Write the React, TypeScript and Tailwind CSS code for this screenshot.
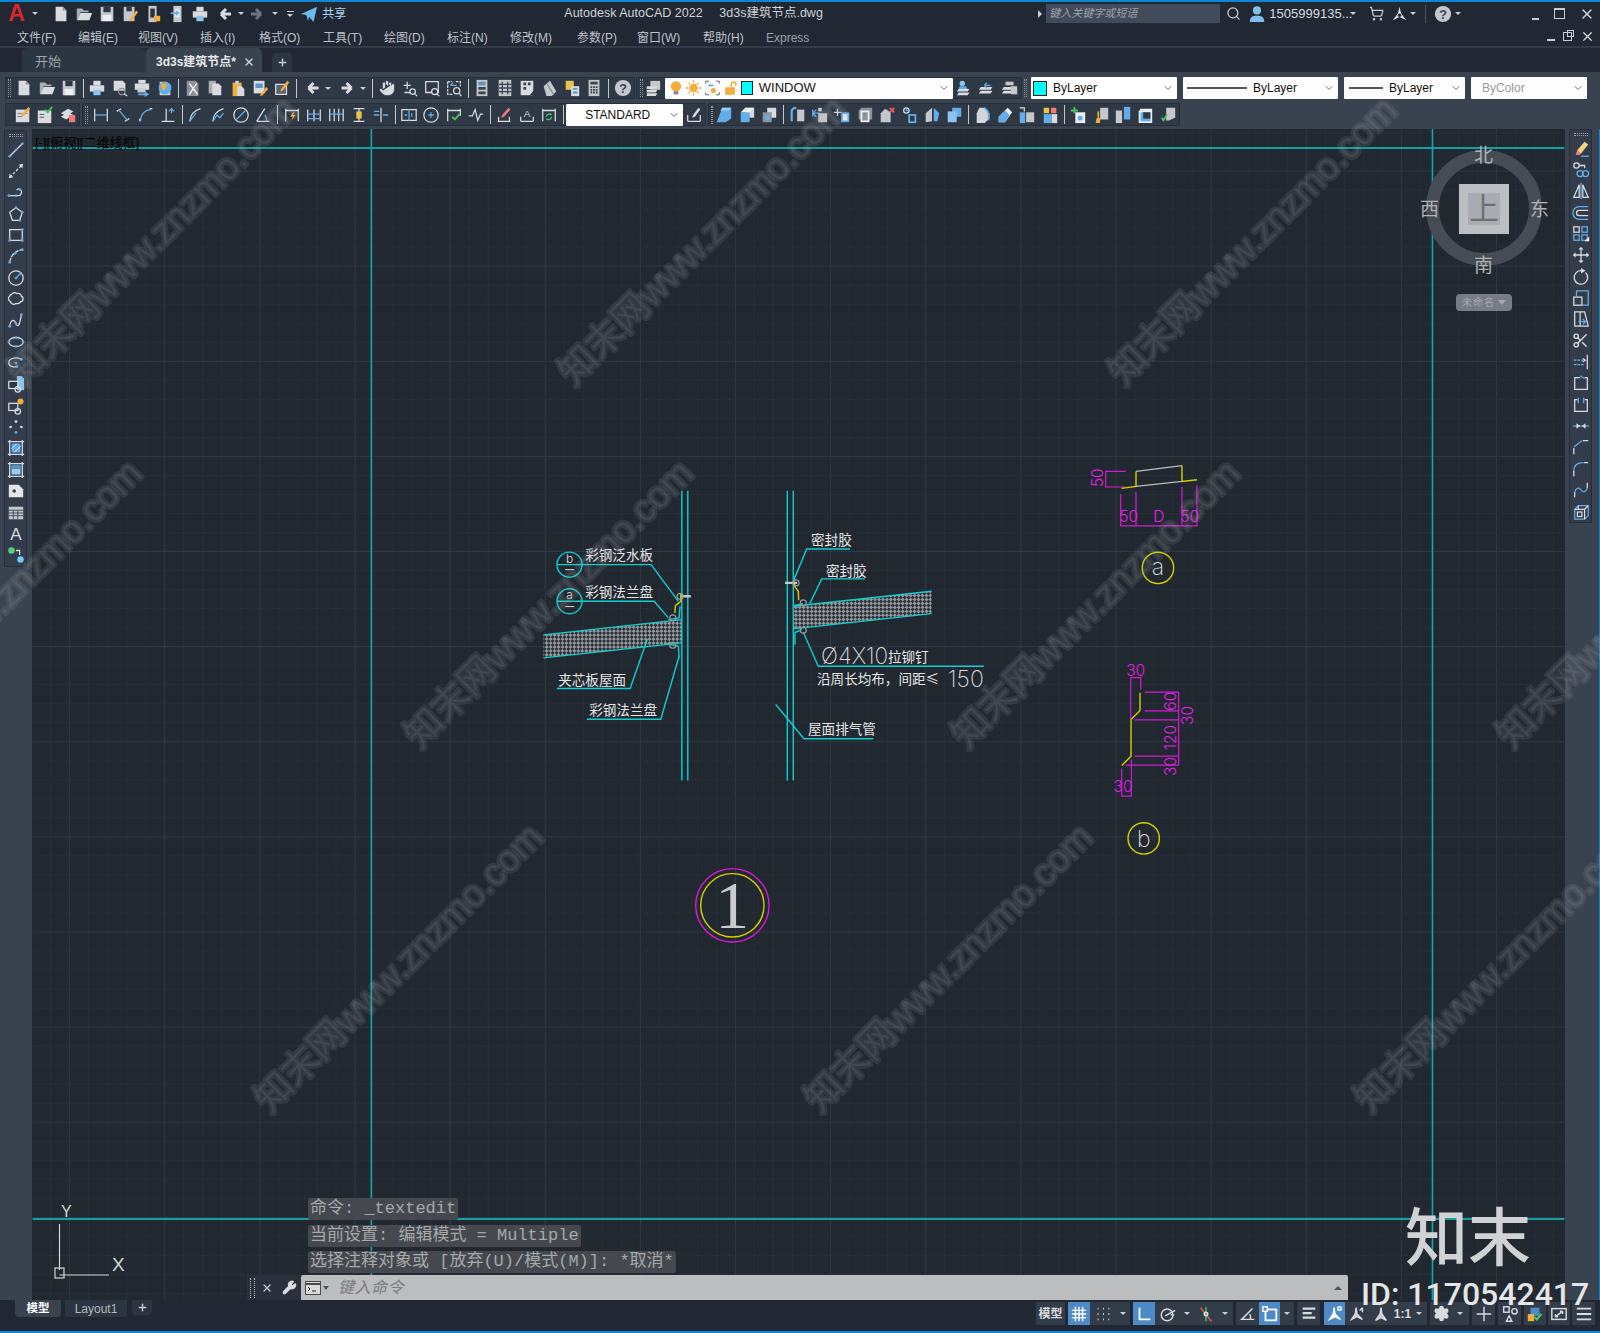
import React from "react";
import { Hand, Scissors, Settings, ChevronDown, Search, ShoppingCart, X, Plus, Wrench } from "lucide-react";

const W = "#d9dbdf";
const B = "#63ade8";
const O = "#f3ad3c";
const D = "#2f3845";

const dot = (x: number, y: number, c = B) => <circle cx={x} cy={y} r={1.5} fill={c} stroke="none" />;
const f = (d: string, c = W) => <path d={d} fill={c} stroke="none" />;

// toolbar glyphs, all on a 20x20 box
const ICONS: Record<string, React.ReactNode> = {
  doc: <>{f("M4 2h8l4 4v12H4z")}{f("M12 2v4h4z", "#8d929a")}</>,
  open: <>{f("M2 4h6l2 2h5v2H6l-2 9H2z", "#a9adb4")}{f("M6 9h13l-3 8H3z")}</>,
  save: <>{f("M3 2h14v16H3z", "#c4c7cc")}{f("M6 2h8v6H6z", D)}{f("M5 11h10v7H5z", "#eceef0")}</>,
  saveas: <>{f("M3 2h12v16H3z", "#c4c7cc")}{f("M6 2h6v5H6z", D)}{f("M17 6l2 2-7 9-3 1 1-3z", O)}</>,
  phone: <>{f("M5 1h9v18H5z", "#c4c7cc")}{f("M7 4h5v10H7z", "#2a313c")}{f("M11 12h7v6h-7z", O)}</>,
  phone2: <>{f("M6 1h9v18H6z", "#c4c7cc")}{f("M8 4h5v10H8z", "#dfe9f2")}{f("M3 8h6V6l4 3-4 3v-2H3z", B)}</>,
  print: <>{f("M6 2h8v5H6z")}{f("M2 7h16v7H2z")}{f("M6 12h8v6H6z", "#8cc4ee")}</>,
  preview: <>{f("M3 2h10l3 3v8H3z")}<circle cx={12} cy={14} r={3.5} stroke="#8b9098" /><path d="M14.5 16.5L18 19" /></>,
  plot: <>{f("M6 1h8v4H6z")}{f("M2 5h16v7H2z")}{f("M5 10h9v5H5z", "#c9ccd1")}{f("M6 16h7v-2l5 3-5 3v-2H6z", B)}</>,
  globe: <>{f("M4 3h8l4 3v12H4z", "#c9ccd1")}<circle cx={10} cy={10} r={7} fill={B} stroke="none" />{f("M5 6l5-2 2 4-3 5-3-3z", O)}</>,
  cut: <>{f("M3 2h10l3 3v14H3z", "#8d929a")}<path d="M6 5l9 12M14 5L6 17" stroke="#fff" /></>,
  copy: <>{f("M3 2h8v14H3z", "#a9adb4")}{f("M7 5h7l3 3v10H7z")}</>,
  paste: <>{f("M4 4h10v15H4z", O)}{f("M7 2h4v4H7z", "#c9ccd1")}{f("M9 8h5l3 3v8H9z")}</>,
  match: <>{f("M3 2h12v14H3z")}{f("M5 5h8v5H5z", "#5b95c9")}{f("M17 9l2 2-6 7-3 1 1-3z", O)}</>,
  brush: <>{f("M3 6h12v11H3z", "#59616d")}<path d="M3 6h12v11H3z" />{f("M16 2l2 2-7 9-3 1 1-3z", O)}</>,
  zoomrt: <><path d="M8 3v8M4 7h8M5 15h6" /><circle cx={14} cy={14} r={3} /><path d="M16 16l3 3" /></>,
  zoomwin: <><path d="M3 3h14v12H3z" /><circle cx={13} cy={14} r={3.4} fill={D} /><path d="M15.5 16.5L18 19" /></>,
  zoomprev: <><path d="M3 3h5M12 3h5v5M3 3v14h5" strokeDasharray="3 1" /><path d="M6 7h7M6 7l3-3" stroke={B} /><circle cx={13} cy={13} r={3.5} /><path d="M16 16l2 3" /></>,
  props: <>{f("M4 1h12v18H4z", "#c4c7cc")}{f("M6 3h8v4H6z", "#5b95c9")}{f("M6 9h8v3H6zM6 14h8v3H6z", "#3a4350")}</>,
  sheet: <>{f("M3 1h14v18H3z", "#c4c7cc")}<path d="M7 3v14M13 3v14M3 6h14M3 10h14M3 14h14" stroke="#3a4350" /></>,
  tools: <>{f("M3 2h14v16H3z")}{f("M6 4h3v3H6zM11 4h3v3h-3zM6 9h3v3H6z", "#3a4350")}{f("M13 18l5-6v6z", D)}</>,
  dwg: <>{f("M3 8L10 2l7 12-5 5H6z", "#c4c7cc")}<path d="M7 6l7 11" stroke="#8d929a" /></>,
  mark: <>{f("M3 2h9v10H3z", "#e9c44d")}{f("M9 8h9v11H9z")}{f("M11 10h5v2h-5zM11 14h5v2h-5z", "#5b95c9")}</>,
  calc: <>{f("M4 1h12v18H4z", "#c4c7cc")}{f("M6 3h8v3H6z", "#3a4350")}{f("M6 8h2v2H6zM9 8h2v2H9zM12 8h2v2h-2zM6 11h2v2H6zM9 11h2v2H9zM12 11h2v2h-2zM6 14h2v2H6zM9 14h2v2H9zM12 14h2v2h-2z", "#3a4350")}</>,
  help: <><circle cx={10} cy={10} r={9} fill="#c4c7cc" stroke="none" /><text x={10} y={15} textAnchor="middle" fontSize={14} fontWeight={700} fill="#39424f" stroke="none" fontFamily="Liberation Sans">?</text></>,
  layer: <>{f("M6 2h11v10H6z", "#c4c7cc")}{f("M2 8h12l-2 3H2zM2 12h12l-2 3H2zM2 16h12l-2 3H2z")}</>,
  lay1: <>{f("M7 2a3 3 0 1 1 0 6 3 3 0 0 1 0-6z", "#8cc4ee")}{f("M3 11h12l-2 3H1zM3 15h12l-2 3H1z")}{f("M4 8h7l2 3H3z", B)}</>,
  lay2: <>{f("M3 9h13l-2 3H1zM3 13h13l-2 3H1z")}<path d="M14 7H7M7 7l3-3M7 7l3 3" stroke={B} /></>,
  lay3: <>{f("M3 9h11l-2 3H1zM3 13h11l-2 3H1z")}{f("M11 8h7v9h-7z", "#c4c7cc")}{f("M5 3h9v4H5z", "#c4c7cc")}</>,
  edit1: <>{f("M2 4h15v14H2z")}{f("M4 8h5v1H4zM4 11h5v1H4zM11 8h4v1h-4z", "#59616d")}{f("M16 1l2 2-7 8-3 1 1-3z", O)}</>,
  edit2: <>{f("M2 5h15v14H2z")}{f("M4 9h5v1H4zM4 12h5v1H4z", "#59616d")}<path d="M10 4l3 3 5-6" stroke="#4dc464" strokeWidth={2} /></>,
  edit3: <>{f("M2 8l8-5 6 3-8 5zM2 12l8-5 6 3-8 5z")}{f("M11 10h7v8h-7z", "#ef7c78")}</>,
  dimh: <><path d="M3 3v14M17 3v14" /><path d="M3 10h14" stroke={B} /></>,
  dima: <><path d="M3 6l5-3M12 17l5-3" /><path d="M5 4l10 12" stroke={B} /></>,
  dimarc: <><path d="M3 17v-3M17 3h-3" /><path d="M4 17C4 9 9 4 16 4" stroke={B} /></>,
  dimo: <><path d="M3 17h14M8 3v14" /><path d="M14 3v5M11 6l3-3 3 3" stroke={B} /></>,
  dimr: <><path d="M3 17C4 9 8 5 15 3" /><path d="M3 17l7-9" stroke={B} /></>,
  dimj: <><path d="M3 17C4 9 8 5 15 3" /><path d="M3 17l5-7 3 3 4-5" stroke={B} /></>,
  dimd: <><circle cx={10} cy={10} r={8} /><path d="M5 15L15 5" stroke={B} /></>,
  dimang: <><path d="M3 17h14M3 17L12 3" /><path d="M12 10c2 2 2 4 2 7" stroke={B} /></>,
  qdim: <><path d="M3 3v14M17 3v14M3 5h14" /><path d="M11 7l-3 5h3l-2 5 5-7h-3l2-3z" fill={O} stroke="none" /></>,
  base: <><path d="M3 4v13M17 4v13M10 4v13" /><path d="M3 9h14M3 14h14" stroke={B} /></>,
  cont: <><path d="M3 3v14M8 3v14M13 3v14M18 3v14" /><path d="M3 9h15" stroke={B} /></>,
  space: <><path d="M4 3h12M4 17h12M10 3v14" /><path d="M7 6h6v8H7z" fill="#e9c44d" stroke="none" /></>,
  brk: <><path d="M10 2v16" /><path d="M2 10h6M12 10h6M2 6h6" stroke={B} /></>,
  tol: <><rect x={2} y={4} width={16} height={12} /><path d="M10 4v12M5 10h3M13 8v4" stroke={B} /></>,
  center: <><circle cx={10} cy={10} r={8} /><path d="M10 7v6M7 10h6" stroke={B} /></>,
  insp: <><path d="M3 3v14M17 3v8M3 5h14" /><path d="M8 12l3 3 5-6" stroke="#4dc464" strokeWidth={2} /></>,
  jog: <><path d="M2 11h4l3-7 3 12 3-7h3" /></>,
  dedit: <><path d="M3 17h14M4 17v-5M16 17v-5" />{f("M15 2l2 2-7 8-3 1 1-3z", "#ef7c78")}</>,
  dtedit: <><path d="M3 17h14M3 12v5M17 12v5" /><text x={10} y={12} textAnchor="middle" fontSize={11} fill={W} stroke="none" fontFamily="Liberation Sans">A</text></>,
  dupd: <><path d="M3 3v14M17 3v14M3 5h14" /><path d="M7 12a3.5 3.5 0 0 1 6-2M13 12a3.5 3.5 0 0 1-6 2" stroke="#4dc464" /></>,
  dstyle: <><path d="M3 17h14M3 10v7M17 10v7" />{f("M15 2l2 2-6 8-3 1 1-3z", W)}</>,
  s1: <>{f("M8 2h10v12l-6 4H2l3-8z", B)}{f("M8 2h10L15 5H6z", "#9bd0f4")}</>,
  s2: <>{f("M8 2h10v11H8z", "#d3d6da")}{f("M3 7h10v11H3z", B)}{f("M3 7l5-5h10l-5 5z", "#eceef0")}</>,
  s3: <>{f("M8 2h10v11H8z")}{f("M3 7h10v11H3z", "#8d929a")}{f("M6 10h5v6H6z", B)}</>,
  s4: <><path d="M3 17V6c0-2 2-4 5-4" stroke={B} strokeWidth={2.5} />{f("M9 4h8v13H9z", "#c4c7cc")}</>,
  s5: <><path d="M2 4v8M2 8h8M6 4l-4 4 4 4" stroke={B} />{f("M8 8h10v10H8z", "#c4c7cc")}{f("M8 2h4v4H8z", "#c4c7cc")}</>,
  s6: <><path d="M5 3v8M1 7h8" />{f("M9 7h9v11H9z", B)}{f("M11 9h5v7h-5z", "#eceef0")}</>,
  s7: <>{f("M3 5l3-3h12v13H3z", "#8d929a")}{f("M5 5h10v13H5z", "#eceef0")}{f("M7 7h6v9H7z", "#8d929a")}</>,
  s8: <>{f("M3 8l5-5 6 4v11H3z", "#c4c7cc")}<path d="M13 2l5 5M18 2l-5 5" stroke="#ef5a5a" strokeWidth={2} /></>,
  s9: <><circle cx={6} cy={5} r={3} /><path d="M6 2v3h4" stroke={B} />{f("M8 9h9v10H8z", B)}{f("M10 11h5v6h-5z", D)}</>,
  s10: <>{f("M3 8L10 2v15l-7 1z", "#c4c7cc")}{f("M12 2l6 6-2 9h-4z", B)}</>,
  s11: <>{f("M8 2h10v10H8z", B)}{f("M3 6h10v12H3z", "#8cc4ee")}</>,
  s13: <>{f("M6 2h6l5 6v6l-5 5H3V8z", "#d3d6da")}<path d="M11 2c5 2 6 8 5 14" stroke={B} strokeWidth={2} /></>,
  s14: <>{f("M3 12l10-10 5 5-8 11H3z", "#eceef0")}{f("M3 12l7-7 5 5-5 8H3z", B)}</>,
  s15: <>{f("M9 7h9v11H9z", "#c4c7cc")}{f("M2 7h6v12H2z", B)}<path d="M2 2h5v4" stroke={W} /></>,
  s16: <>{f("M3 2h6v6H3z", "#e9c44d")}{f("M11 2h6v6h-6z", "#ef7c78")}{f("M3 9h9v10H3z", B)}{f("M12 9h6v10h-6z", W)}</>,
  s17: <><path d="M6 1v7M2 5h8" stroke="#4dc464" strokeWidth={2} />{f("M7 7h11v12H7z", "#eceef0")}{f("M10 11h5v5h-5z", B)}</>,
  s18: <>{f("M9 2h9v13H9z", "#c4c7cc")}{f("M5 14l2-2 2 2v5H4z", O)}<path d="M7 6v6" stroke={O} strokeWidth={2} /></>,
  s19: <>{f("M2 5h7v14H2z", "#c4c7cc")}{f("M11 1h7v14h-7z", B)}</>,
  s20: <>{f("M5 3h13v16H3V6z", "#eceef0")}{f("M5 7h11v10H5z", B)}{f("M8 7h8v7H8z", D)}</>,
  s21: <>{f("M8 2h10v11l-7 3H8z", "#c4c7cc")}<path d="M3 13l2 3 4-7" stroke="#4dc464" strokeWidth={2} /></>,
  // left column
  line: <><path d="M3 17L17 3" />{dot(3, 17)}{dot(17, 3)}{dot(10, 10)}</>,
  xline: <><path d="M3 17L17 3" strokeDasharray="3 2" /><path d="M2 18l5-1-4-4zM18 2l-5 1 4 4z" fill={W} stroke="none" /></>,
  pline: <><path d="M2 14h8M11 14c5 1 7-5 3-7-1-1-3 0-3 1" />{dot(2, 14)}{dot(10, 14)}{dot(14, 7)}</>,
  polygon: <><path d="M10 3l7 5-3 9H6L3 8z" />{dot(10, 3)}{dot(14, 17)}{dot(17, 8)}</>,
  rect: <><rect x={3} y={4} width={14} height={12} />{dot(17, 4)}{dot(3, 16)}{dot(17, 16)}</>,
  arc: <><path d="M3 17C4 9 10 4 17 3" strokeDasharray="5 1" />{dot(3, 17)}{dot(9, 7)}{dot(17, 3)}</>,
  circle: <><circle cx={10} cy={10} r={8} /><path d="M10 10l5-5" stroke={B} />{dot(10, 10)}{dot(15, 5)}</>,
  cloud: <><path d="M5 5c2-3 5-2 6-1 3-1 5 1 5 3 3 1 2 6-1 6-1 3-4 2-5 2-3 2-6 0-6-2-3-1-3-5-1-6 0-1 1-2 2-2z" /></>,
  spline: <><path d="M3 17c1-8 5-8 7-3s4 2 6-10" />{dot(3, 17)}{dot(10, 14)}{dot(16, 4)}</>,
  ellipse: <><ellipse cx={10} cy={10} rx={8} ry={5} />{dot(10, 5)}{dot(2, 10)}{dot(18, 10)}{dot(10, 15)}</>,
  earc: <><path d="M16 6c-4-3-14-2-14 4 0 4 6 5 9 4" />{dot(16, 6)}{dot(11, 14)}{dot(10, 10)}</>,
  blk: <>{f("M11 1h5l3 3v13H11z", "#8cc4ee")}<rect x={2} y={7} width={10} height={8} stroke={W} fill={D} /><circle cx={12} cy={16} r={3} /></>,
  mblk: <><rect x={2} y={7} width={10} height={8} /><circle cx={12} cy={16} r={3} /><circle cx={15} cy={5} r={3.4} fill={O} stroke="none" /></>,
  point: <>{dot(10, 4, W)}{dot(4, 10, W)}{dot(16, 10, W)}{dot(10, 16, B)}</>,
  hatch: <><path d="M1 3h18M1 17h18M3 1v18M17 1v18" />{f("M5 5h10v10H5z", B)}<path d="M5 11l6-6M8 15l7-7" stroke="#dce9f5" strokeWidth={1} /></>,
  grad: <><path d="M1 3h18M1 17h18M3 1v18M17 1v18" />{f("M5 5h10v10H5z", "#9bd0f4")}{f("M5 5h10v4H5z", "#4c91cc")}</>,
  region: <>{f("M2 3h11l5 5v9H2z", "#e3e5e7")}<circle cx={8} cy={10} r={2} fill="#39424f" stroke="none" /></>,
  table: <>{f("M2 3h16v14H2z", "#c4c7cc")}<path d="M2 7h16M2 10h16M2 13h16M7 7v10M12 7v10" stroke="#39424f" strokeWidth={1} /></>,
  atext: <text x={10} y={17} textAnchor="middle" fontSize={19} fill={W} stroke="none" fontFamily="Liberation Sans">A</text>,
  addsel: <><circle cx={5} cy={5} r={3.6} fill="#5ad07e" stroke="none" /><circle cx={15} cy={15} r={3.6} fill="#74c7f5" stroke="none" /><path d="M10 5h4v5" /></>,
  // right column
  erase: <>{f("M14 2l4 3-8 10-5 1 1-5z", "#f1d58a")}{f("M6 11l4 4-2 2-4-1z", "#ef7c78")}<path d="M10 18h9" stroke={B} /></>,
  mcopy: <><circle cx={5} cy={5} r={3} /><path d="M8 5h6v3" /><circle cx={9} cy={14} r={3.4} stroke={B} /><circle cx={15} cy={14} r={3.4} stroke={B} /></>,
  mirror: <><path d="M8 3L2 17h6zM12 3l6 14h-6z" /><path d="M10 1v18" stroke={B} /></>,
  offset: <><path d="M18 3H8a6 6 0 0 0 0 14h10" stroke={B} /><path d="M18 7H8a2.5 2.5 0 0 0 0 6h10" /></>,
  array: <><rect x={2} y={2} width={6} height={6} /><rect x={11} y={2} width={6} height={6} stroke={B} /><rect x={2} y={11} width={6} height={6} stroke={B} /><rect x={11} y={11} width={6} height={6} stroke={B} />{f("M14 18l5-5v5z", "#fff")}</>,
  move: <><path d="M10 2v16M2 10h16" />{f("M10 1l3 3H7zM10 19l3-3H7zM1 10l3-3v6zM19 10l-3-3v6z")}</>,
  rotate: <><path d="M15 5a7.5 7.5 0 1 1-5-2" />{f("M10 0l5 3-5 3z")}</>,
  scale: <><rect x={2} y={9} width={9} height={9} /><path d="M5 9V2h13v16h-7" stroke={B} /></>,
  stretch: <><path d="M3 2h6v16H3zM9 2h5l4 16H9" /><path d="M7 13h8M12 10l3 3-3 3" stroke={B} /></>,
  extend: <><path d="M17 2v16" /><path d="M2 8h11M2 13h11" stroke={B} strokeDasharray="3 1" /><path d="M12 6l3 2-3 2" /></>,
  brkat: <><path d="M9 4H3v13h14V4h-3" /><path d="M9 2l5 3" stroke={B} /></>,
  brk2: <><path d="M6 4H3v13h14V4h-3" /><path d="M7 2v6M13 2v6" stroke={B} /></>,
  join: <><path d="M1 10h18" stroke={B} />{f("M5 7l4 3-4 3zM15 7l-4 3 4 3z", W)}</>,
  chamfer: <><path d="M2 18v-7M12 3h6" /><path d="M2 10l9-7" stroke={B} /></>,
  fillet: <><path d="M2 18v-6M13 3h5" /><path d="M2 12c0-6 4-9 10-9" stroke={B} /></>,
  blend: <><path d="M3 18v-6M17 2v6" /><path d="M3 12c2-5 5-5 7-2s5 3 7-2" stroke={B} /></>,
  explode: <><path d="M3 7l4-4h11v11l-4 4H3z" stroke={B} /><path d="M7 3v4H3M18 3l-4 4v11M14 7H7" /><rect x={6} y={10} width={5} height={5} /></>,
};

function Ico({ name, size = 18 }: { name: string; size?: number }) {
  return (
    <svg width={size} height={size} viewBox="0 0 20 20" fill="none" stroke={W} strokeWidth={1.4}>
      {ICONS[name]}
    </svg>
  );
}

const Caret = ({ c = "w-[11px]" }: { c?: string }) => (
  <span className={`${c} flex justify-center`}>
    <span className="border-x-[3px] border-t-[3px] border-x-transparent border-t-[#c9ccd1]" />
  </span>
);

const Grip = () => <span className="mx-[2px] h-[18px] w-[3px] border-x border-dotted border-[#8d929a]" />;

// "|" is a divider, "^" a dropdown caret, the rest icon names
function Items({ list, sep = "w-[7px]", cell = "w-[22.4px]" }: { list: string[]; sep?: string; cell?: string }) {
  return (
    <>
      {list.map((it, i) =>
        it === "|" ? (
          <span key={i} className={`${sep} flex h-full items-center justify-center`}>
            <span className="h-[19px] w-px bg-[#c4c7cc]" />
          </span>
        ) : it === "^" ? (
          <Caret key={i} />
        ) : it === "hand" ? (
          <span key={i} className={`flex ${cell} justify-center`}>
            <Hand size={18} fill="#d9dbdf" stroke="#39424f" strokeWidth={1} />
          </span>
        ) : (
          <span key={i} className={`flex ${cell} justify-center`}>
            <Ico name={it} />
          </span>
        ),
      )}
    </>
  );
}

const bar = "flex items-center rounded-[1px] border border-[#272e39] bg-[#2f3845]";

function Combo({ className, children, chev = "#6b7078" }: { className: string; children: React.ReactNode; chev?: string }) {
  return (
    <div className={`flex items-center rounded-[1px] bg-[#fdfdfd] text-[12px] text-[#111] ${className}`}>
      {children}
      <ChevronDown size={12} color={chev} className="mr-[3px] ml-auto" />
    </div>
  );
}

const MENUS: [string, string][] = [
  ["文件(F)", "w-[38px]"], ["编辑(E)", "w-[37px]"], ["视图(V)", "w-[39px]"], ["插入(I)", "w-[36px]"], ["格式(O)", "w-[41px]"],
  ["工具(T)", "w-[38px]"], ["绘图(D)", "w-[40px]"], ["标注(N)", "w-[40px]"], ["修改(M)", "w-[44px]"], ["参数(P)", "w-[37px]"],
  ["窗口(W)", "w-[43px]"], ["帮助(H)", "w-[40px]"], ["Express", "w-[44px]"],
];

const LEFT = ["line", "xline", "pline", "polygon", "rect", "arc", "circle", "cloud", "spline", "ellipse", "earc", "blk", "mblk", "point", "hatch", "grad", "region", "table", "atext", "addsel"];
const RIGHT = ["erase", "mcopy", "mirror", "offset", "array", "move", "rotate", "scale", "stretch", "trim", "extend", "brkat", "brk2", "join", "chamfer", "fillet", "blend", "explode"];

function Column({ list }: { list: string[] }) {
  return (
    <div className="flex flex-col items-center rounded-[1px] border border-[#272e39] bg-[#333c4a]">
      <span className="mt-[3px] mb-[2px] h-[3px] w-[14px] border-y border-dotted border-[#9a9fa6]" />
      {list.map((n) => (
        <span key={n} className="flex h-[21.35px] w-[21px] items-center justify-center">
          {n === "trim" ? <Scissors size={17} color={W} /> : <Ico name={n} />}
        </span>
      ))}
    </div>
  );
}

const MARKS: [number, number][] = [
  [24, 387], [574, 387], [1124, 387],
  [-131, 750], [420, 750], [967, 750], [1512, 750],
  [270, 1114], [820, 1114], [1370, 1114],
];

const CJK = "'Noto Sans CJK SC', sans-serif";
const LAT = "'Liberation Sans', 'Noto Sans CJK SC', sans-serif";
const THIN = "Inter, 'Liberation Sans', sans-serif";

function Note({ x, y, t }: { x: number; y: number; t: string }) {
  return <text x={x} y={y} fontSize={13.6} fill="#e6e6e6" fontFamily={CJK}>{t}</text>;
}

function Dim({ x, y, t, rot }: { x: number; y: number; t: string; rot?: boolean }) {
  return (
    <text transform={`translate(${x} ${y})${rot ? " rotate(-90)" : ""}`} textAnchor="middle" dominantBaseline="central" fontSize={15.5} fontWeight={300} fill="#e81ee8" fontFamily={THIN}>
      {t}
    </text>
  );
}

function Drawing() {
  const vs = Array.from({ length: 82 }, (_, i) => 50 + i * 19.04);
  const hs = Array.from({ length: 62 }, (_, i) => 133 + i * 19.04);
  const cy = "#0fcfd2";
  const mg = "#d818d8";
  const ye = "#d6d000";
  return (
    <svg className="block h-full w-full" viewBox="32 129 1533 1172">
      <defs>
        <pattern id="hatch" width={5.6} height={5.6} patternUnits="userSpaceOnUse" patternTransform="rotate(45)">
          <rect width={5.6} height={5.6} fill="#2a3038" />
          <rect width={2.8} height={2.8} fill="#95979a" />
          <rect x={2.8} y={2.8} width={2.8} height={2.8} fill="#95979a" />
        </pattern>
      </defs>
      {vs.map((x, i) => (
        <line key={i} x1={x} x2={x} y1={129} y2={1301} stroke={i % 5 === 1 ? "#303846" : "#272e38"} />
      ))}
      {hs.map((y, i) => (
        <line key={i} y1={y} y2={y} x1={32} x2={1565} stroke={i % 5 === 2 ? "#303846" : "#272e38"} />
      ))}

      {/* frame */}
      <path d="M32 148H1565M32 1220H1565" stroke="#0fc8cc" strokeWidth={1.6} fill="none" />
      <path d="M371 129V1301M1433 129V1301" stroke="#0fa9ac" strokeWidth={1.6} fill="none" />

      {/* roof panels */}
      <path d="M543.3 635.3L681.7 620V643.3L543.3 658.3Z" fill="url(#hatch)" />
      <path d="M793.3 606.7L931.7 591.7V614L793.3 629.3Z" fill="url(#hatch)" />

      <g fill="none" stroke={cy} strokeWidth={1.4}>
        <path d="M681.7 491V781M687.7 491V781M787.3 491V781M793.3 491V781" />
        <path d="M543.3 635.3L681.7 620M543.3 658.3L681.7 643.3M793.3 606.7L931.7 591.7M793.3 629.3L931.7 614" />
        <circle cx={569.3} cy={565} r={12.5} />
        <circle cx={569.3} cy={601.7} r={12.5} />
        <path d="M557 565H651L678.3 601.7M557 601.7H654L668.3 618.3" />
        <path d="M556.7 689H630L647.3 639.3M586.7 719.7H660.7L679 656.7" />
        <path d="M850 549.3H806.7L794 580M865 579.3H821.7L809.3 605" />
        <path d="M984 666.7H818.3L803.3 632.7M775.7 705L804 739.3H873.3" />
        <path d="M680 606.7L679 618.3L668.3 620M666.7 644L678.3 646.7L679 658" />
        <path d="M793.3 606L803 604M795 645V633L801.7 630" />
      </g>
      <path d="M680.7 593.3V601.7L675.3 606L674.7 613.3M794.3 581.7L795 587.3L798.3 591.7L798.7 600.7" fill="none" stroke={ye} strokeWidth={1.4} />
      <path d="M681.7 596.7H690.7M785 583.3H797" stroke="#c8c8c8" strokeWidth={2.4} />
      <g fill="none" stroke="#9a9da0" strokeWidth={1.2}>
        <circle cx={672.7} cy={618.3} r={3} />
        <circle cx={672.7} cy={645.7} r={3} />
        <circle cx={680} cy={596.7} r={3} />
        <circle cx={803.3} cy={603.3} r={3} />
        <circle cx={803.3} cy={630.7} r={3} />
        <circle cx={796} cy={583.3} r={3} />
      </g>
      <text x={569.3} y={563} textAnchor="middle" fontSize={12} fontWeight={300} fill="#dcdcdc" fontFamily={THIN}>b</text>
      <text x={569.3} y={599} textAnchor="middle" fontSize={12} fontWeight={300} fill="#dcdcdc" fontFamily={THIN}>a</text>
      <path d="M565 570H574M565 607H574" stroke="#dcdcdc" />

      <Note x={585} y={560} t="彩钢泛水板" />
      <Note x={585} y={597} t="彩钢法兰盘" />
      <Note x={558} y={685} t="夹芯板屋面" />
      <Note x={589} y={716} t="彩钢法兰盘" />
      <Note x={811} y={545} t="密封胶" />
      <Note x={826} y={576} t="密封胶" />
      <Note x={808} y={735} t="屋面排气管" />
      <text x={821} y={664} fontSize={22.5} fontWeight={200} fill="#dcdcdc" fontFamily={THIN}>Ø4X10</text>
      <Note x={888} y={662} t="拉铆钉" />
      <Note x={817} y={684} t="沿周长均布，间距≤" />
      <text x={948} y={687} fontSize={23} fontWeight={200} fill="#dcdcdc" fontFamily={THIN}>150</text>

      {/* detail a */}
      <g fill="none" stroke={mg} strokeWidth={1.2}>
        <path d="M1126 471.7H1106V487.3H1126" />
        <path d="M1121 494.3V526.3H1197.3V485M1136.3 492V526.3M1182.3 487.3V526.3" />
      </g>
      <path d="M1121.7 488.7L1136.3 486.7V471.7M1182.3 466V481.7L1197.3 480" fill="none" stroke={ye} strokeWidth={1.4} />
      <path d="M1136.3 471.7L1182.3 466M1136.3 486.7L1182.3 481.7" fill="none" stroke="#bdbdbd" strokeWidth={1.2} />
      <Dim x={1098} y={478} t="50" rot />
      <Dim x={1129} y={517} t="50" />
      <Dim x={1159} y={517} t="D" />
      <Dim x={1190} y={517} t="50" />
      <circle cx={1158.3} cy={568.3} r={15.7} fill="none" stroke={ye} strokeWidth={1.4} />
      <text x={1158.3} y={575} textAnchor="middle" fontSize={23} fontWeight={200} fill="#dcdcdc" fontFamily={THIN}>a</text>

      {/* detail b */}
      <path d="M1140.3 693.3V711L1131.3 720V756.7L1122 766" fill="none" stroke={ye} strokeWidth={1.4} />
      <g fill="none" stroke={mg} strokeWidth={1.2}>
        <path d="M1141 690V678H1131V720" />
        <path d="M1145 692.7H1179M1145 711.3H1179M1135 720.3H1179M1135 756.7H1179M1126 765.7H1179M1179 692.7V765.7" />
        <path d="M1122 769V796.7H1131.7V760" />
      </g>
      <Dim x={1136} y={671} t="30" />
      <Dim x={1170.7} y={701.7} t="60" rot />
      <Dim x={1188} y={716} t="30" rot />
      <Dim x={1170.7} y={738} t="120" rot />
      <Dim x={1170.7} y={767} t="30" rot />
      <Dim x={1123.3} y={787} t="30" />
      <circle cx={1144} cy={839} r={15.7} fill="none" stroke={ye} strokeWidth={1.4} />
      <text x={1144} y={848} textAnchor="middle" fontSize={23} fontWeight={200} fill="#dcdcdc" fontFamily={THIN}>b</text>

      {/* section mark */}
      <circle cx={732.3} cy={906} r={36.7} fill="none" stroke={mg} strokeWidth={1.4} />
      <circle cx={732.3} cy={906} r={31.7} fill="none" stroke={ye} strokeWidth={1.4} />
      <text x={732.3} y={929} textAnchor="middle" fontSize={68} fill="#c8ccd0" fontFamily="'Liberation Serif', serif">1</text>
    </svg>
  );
}

const statusBox = "flex h-[23px] items-center rounded-[1px] bg-[#333c49]";
const on = "flex h-[23px] items-center justify-center bg-[#4d8ac6]";

function Sb({ d, c = W }: { d: React.ReactNode; c?: string }) {
  return (
    <svg width={18} height={18} viewBox="0 0 20 20" fill="none" stroke={c} strokeWidth={1.6}>
      {d}
    </svg>
  );
}

function StatusBar() {
  return (
    <div className="flex h-[31px] items-start bg-[#212733] pl-[15px]">
      <div className="flex h-[17px] w-[46px] items-center justify-center rounded-b-[4px] bg-[#39424f] text-[11.5px] font-bold text-white">模型</div>
      <div className="ml-[4px] flex h-[17px] w-[62px] items-center justify-center rounded-b-[4px] bg-[#2c3441] text-[12px] text-[#b5b9bf]">Layout1</div>
      <div className="ml-[5px] flex h-[15px] w-[20px] items-center justify-center rounded-b-[4px] bg-[#2c3441]">
        <Plus size={11} color="#c9ccd1" strokeWidth={3} />
      </div>

      <div className="mt-[2px] mr-[5px] ml-auto flex items-center gap-[3px]">
        <div className={`${statusBox} w-[29px] justify-center text-[12px] font-bold text-[#d9dbdf]`}>模型</div>
        <div className={`${statusBox} w-[62px]`}>
          <span className={`${on} w-[22px]`}><Sb c="#fff" d={<path d="M2 6h16M2 10h16M2 14h16M6 2v16M10 2v16M14 2v16" />} /></span>
          <span className="flex w-[26px] justify-center"><Sb d={<path d="M4 4h1M10 4h1M16 4h1M4 10h1M10 10h1M16 10h1M4 16h1M10 16h1M16 16h1" strokeWidth={2} />} /></span>
          <Caret c="w-[14px]" />
        </div>
        <div className={`${statusBox} w-[100px]`}>
          <span className={`${on} w-[22px]`}><Sb c="#fff" d={<path d="M5 3v13h12" strokeWidth={2} />} /></span>
          <span className="flex w-[26px] justify-center"><Sb d={<><circle cx={9} cy={11} r={6.5} /><path d="M7 12L18 6M13 11l4 0" /></>} /></span>
          <Caret c="w-[12px]" />
          <span className="flex w-[26px] justify-center"><Sb d={<><path d="M4 3l12 15" stroke="#e05c5c" /><path d="M10 2v16" stroke="#49c46a" /><circle cx={10} cy={10} r={2} /></>} /></span>
          <Caret c="w-[12px]" />
        </div>
        <div className={`${statusBox} w-[58px]`}>
          <span className="flex w-[23px] justify-center"><Sb d={<path d="M15 4L3 16h14M12 10c1 2 1 4 1 6" />} /></span>
          <span className={`${on} w-[21px]`}><Sb c="#fff" d={<><rect x={5} y={5} width={12} height={12} strokeWidth={2} /><rect x={2} y={2} width={5} height={5} fill="#4d8ac6" /></>} /></span>
          <Caret c="w-[14px]" />
        </div>
        <div className={`${statusBox} w-[23px] justify-center`}>
          <Sb d={<path d="M3 4h14M3 9h10M3 14h14" strokeWidth={2.4} />} />
        </div>
        <div className={`${statusBox} ml-[1px] w-[103px]`}>
          <span className={`${on} w-[21px]`}><Sb c="#fff" d={<><path d="M9 3l1 7 6 6-6-3-6 3 4-6z" fill="#fff" /><circle cx={15} cy={4} r={2} /></>} /></span>
          <span className="flex w-[24px] justify-center"><Sb d={<path d="M9 3l1 7 6 6-6-3-6 3 4-6zM16 3v5M13 6l3-3" fill="#c4c7cc" />} /></span>
          <span className="flex w-[24px] justify-center"><Sb d={<path d="M10 3l1 7 5 7-6-3-6 3 5-7z" fill="#c4c7cc" />} /></span>
          <span className="w-[19px] text-center text-[12px] font-bold text-[#d9dbdf]">1:1</span>
          <Caret c="w-[14px]" />
        </div>
        <div className={`${statusBox} w-[39px] pl-[3px]`}>
          <Settings size={17} color="#d9dbdf" fill="#d9dbdf" />
          <Caret c="w-[19px]" />
        </div>
        <div className={`${statusBox} w-[23px] justify-center`}><Sb d={<path d="M10 2v16M2 10h16" />} /></div>
        <div className={`${statusBox} w-[23px] justify-center`}><Sb d={<><rect x={3} y={2} width={6} height={6} /><circle cx={15} cy={7} r={3} /><path d="M9 12l3 6H6z" /></>} /></div>
        <div className={`${statusBox} w-[22px] justify-center`}><Sb d={<>{f("M5 3h10v9H5z", "#4d8ac6")}{f("M2 10h7v8H2z", O)}<path d="M9 13l3 3 5-6" stroke="#49c46a" strokeWidth={2.4} /></>} /></div>
        <div className={`${statusBox} -ml-[1px] w-[22px] justify-center`}><Sb d={<><rect x={2} y={4} width={16} height={12} /><path d="M6 13l8-6M14 7h-3M14 7v3M6 13h3M6 13v-3" /></>} /></div>
        <div className={`${statusBox} -ml-[1px] w-[23px] justify-center`}><Sb d={<path d="M2 4h16M2 10h16M2 16h16" strokeWidth={2} />} /></div>
      </div>
    </div>
  );
}

export default function App() {
  return (
    <div className="relative flex h-[1333px] w-[1600px] flex-col overflow-hidden bg-[#212733] font-['Liberation_Sans','Noto_Sans_CJK_SC',sans-serif]">
      {/* title bar */}
      <div className="flex h-[25px] shrink-0 items-center border-t-2 border-[#0a86d4] pl-[8px]">
        <span className="w-[17px] text-center text-[23px] leading-none font-bold text-[#d8262c]">A</span>
        <Caret c="w-[11px] ml-[4px]" />
        <div className="ml-[9px] flex items-center">
          <Items list={["doc", "open", "save", "saveas", "phone", "phone2", "print"]} cell="w-[23.2px]" />
          <span className="ml-[5px]"><svg width={16} height={14} viewBox="0 0 16 14"><path d="M15 7H5M5 7l5-5M5 7l5 5" stroke="#d9dbdf" strokeWidth={3} fill="none" /></svg></span>
          <Caret c="w-[18px]" />
          <svg width={16} height={14} viewBox="0 0 16 14"><path d="M1 7h10M11 7L6 2M11 7l-5 5" stroke="#6b7280" strokeWidth={3} fill="none" /></svg>
          <Caret c="w-[18px]" />
          <span className="flex w-[12px] flex-col items-center gap-[2px]">
            <span className="h-[1px] w-[7px] bg-[#c9ccd1]" />
            <Caret c="w-[7px]" />
          </span>
          <svg className="ml-[4px]" width={18} height={18} viewBox="0 0 20 20"><path d="M1 10L19 2l-4 17-5-6-1 5-2-7z" fill="#6cb9ee" /></svg>
          <span className="ml-[4px] text-[12px] text-[#a9d2ee]">共享</span>
        </div>
        <span className="ml-[218px] w-[155px] whitespace-nowrap text-[12.5px] text-[#cfd2d6]">Autodesk AutoCAD 2022</span>
        <span className="w-[101px] whitespace-nowrap text-[12.5px] text-[#cfd2d6]">3d3s建筑节点.dwg</span>
        <span className="ml-[218px] border-y-[4px] border-l-[4px] border-y-transparent border-l-[#c9ccd1]" />
        <div className="ml-[4px] flex h-[19px] w-[174px] items-center bg-[#414a5a] pl-[3px] text-[11px] text-[#9ea3aa] italic">键入关键字或短语</div>
        <Search size={15} color="#c9ccd1" className="ml-[6px]" />
        <svg className="ml-[7px]" width={18} height={18} viewBox="0 0 20 20"><circle cx={10} cy={6} r={4.5} fill="#7fc0ee" /><path d="M2 19c0-6 3-7 8-7s8 1 8 7z" fill="#7fc0ee" /></svg>
        <span className="ml-[3px] w-[80px] text-[13px] text-[#d9dbdf]">1505999135...</span>
        <Caret c="w-[7px]" />
        <ShoppingCart size={15} color="#c9ccd1" className="ml-[13px]" />
        <svg className="ml-[7px]" width={17} height={17} viewBox="0 0 20 20"><path d="M10 2l2 8 6 8-8-4-8 4 6-8z" fill="#d9dbdf" /><circle cx={10} cy={12} r={2} fill="#212733" /></svg>
        <Caret c="w-[9px]" />
        <span className="mx-[8px] h-[18px] w-px bg-[#4a5260]" />
        <Ico name="help" />
        <Caret c="w-[11px]" />
        <span className="ml-[69px] h-[2px] w-[7px] translate-y-[5px] bg-[#c9ccd1]" />
        <span className="ml-[15px] h-[11px] w-[11px] border border-t-2 border-[#c9ccd1]" />
        <X size={16} color="#d9dbdf" className="ml-[14px]" />
      </div>

      {/* menu */}
      <div className="flex h-[21px] shrink-0 items-center pt-[5px] pl-[17px] text-[12px] text-[#bfc3c9]">
        {MENUS.map(([t, w]) => (
          <span key={t} className={`${w} mr-[23px] whitespace-nowrap ${t === "Express" ? "text-[#9aa0a8]" : ""}`}>{t}</span>
        ))}
        <span className="ml-auto flex -translate-y-[2px] items-center gap-[8px] pr-[5px]">
          <span className="h-[2px] w-[8px] translate-y-[4px] bg-[#c9ccd1]" />
          <span className="relative h-[9px] w-[9px] border border-[#c9ccd1]"><span className="absolute -top-[3px] -right-[3px] h-[7px] w-[7px] border border-[#c9ccd1]" /></span>
          <X size={15} color="#d9dbdf" />
        </span>
      </div>

      {/* file tabs */}
      <div className="flex h-[26px] shrink-0 items-end border-t-2 border-[#333b49] pl-[22px] text-[13px]">
        <div className="flex h-[24px] w-[124px] items-center rounded-t-[5px] bg-[#2c3542] pt-[3px] pl-[13px] text-[#9ea3aa]">开始</div>
        <div className="flex h-[24px] w-[116px] items-center rounded-t-[5px] bg-[#39424f] pt-[3px] pl-[10px] text-[12px] font-bold text-[#e6e8ea]">
          3d3s建筑节点*
          <X size={12} color="#c9ccd1" strokeWidth={3} className="ml-[7px]" />
        </div>
        <div className="ml-[10px] flex h-[19px] w-[20px] items-center justify-center rounded-t-[4px] bg-[#2c3542]">
          <Plus size={11} color="#c9ccd1" strokeWidth={3} />
        </div>
      </div>

      {/* toolbars */}
      <div className="flex h-[57px] shrink-0 flex-col gap-[4px] bg-[#39424f] pt-[5px] pl-[5px] text-[13px]">
        <div className="flex h-[22px] items-center">
          <div className={`${bar} h-full w-[630px]`}>
            <Grip />
            <Items list={["doc", "open", "save", "|", "print", "preview", "plot", "globe", "|", "cut", "copy", "paste", "match", "brush", "|"]} sep="w-[6px]" />
            <svg className="ml-[3px]" width={17} height={14} viewBox="0 0 16 14"><path d="M15 7H5M5 7l5-5M5 7l5 5" stroke="#d9dbdf" strokeWidth={3} fill="none" /></svg>
            <Caret c="w-[16px]" />
            <svg className="ml-[4px]" width={17} height={14} viewBox="0 0 16 14"><path d="M1 7h10M11 7L6 2M11 7l-5 5" stroke="#d9dbdf" strokeWidth={3} fill="none" /></svg>
            <Caret c="w-[13px]" />
            <Items list={["|", "hand", "zoomrt", "zoomwin", "zoomprev", "|", "props", "sheet", "tools", "dwg", "mark", "calc", "|", "help"]} sep="w-[6px]" />
          </div>
          <div className={`${bar} ml-[1px] h-[22px] w-[386px] pl-[1px]`}>
            <Grip />
            <Ico name="layer" />
            <Combo className="ml-[2px] h-[21px] w-[291px]">
              <span className="flex items-center pl-[3px]">
                <svg width={16} height={18} viewBox="0 0 20 20"><circle cx={10} cy={8} r={6.5} fill={O} /><rect x={7} y={14} width={6} height={4} fill="#888" /></svg>
                <svg className="ml-[1px]" width={17} height={18} viewBox="0 0 20 20"><circle cx={10} cy={10} r={5} fill={O} /><path d="M10 1v3M10 16v3M1 10h3M16 10h3M4 4l2 2M14 14l2 2M16 4l-2 2M4 16l2-2" stroke={O} strokeWidth={1.5} /></svg>
                <svg className="ml-[2px]" width={17} height={18} viewBox="0 0 20 20"><path d="M2 5V2h4M14 2h4v3M2 15v3h4M18 15v3h-4" stroke="#555" fill="none" /><circle cx={11} cy={13} r={3} fill={O} /><path d="M5 7h6" stroke="#6fa7d6" strokeWidth={2} /></svg>
                <svg className="ml-[2px]" width={15} height={18} viewBox="0 0 20 20"><rect x={3} y={9} width={13} height={10} fill={O} /><path d="M11 9V5a3 3 0 0 1 6 0v2" stroke={O} strokeWidth={2} fill="none" /></svg>
                <span className="ml-[3px] h-[14px] w-[12px] border border-[#222] bg-[#00ffff]" />
                <span className="ml-[6px] text-[13px]">WINDOW</span>
              </span>
            </Combo>
            <span className="ml-[1px] flex">
              <Items list={["lay1", "lay2", "lay3"]} />
            </span>
          </div>
          <Grip />
          <Combo className="ml-[2px] h-[22px] w-[146px] bg-white pl-[2px]">
            <span className="h-[15px] w-[14px] border border-[#222] bg-[#00ffff]" />
            <span className="ml-[6px]">ByLayer</span>
          </Combo>
          <Combo className="ml-[6px] h-[22px] w-[155px] pl-[4px]">
            <span className="h-[2px] w-[60px] bg-[#555]" />
            <span className="ml-[6px]">ByLayer</span>
          </Combo>
          <Combo className="ml-[6px] h-[22px] w-[121px] pl-[5px]">
            <span className="h-[2px] w-[34px] bg-[#555]" />
            <span className="ml-[6px]">ByLayer</span>
          </Combo>
          <Combo className="ml-[6px] h-[22px] w-[116px] bg-[#f0f0f0] pl-[11px] text-[#9a9a9a]">
            <span className="text-[#9a9a9a]">ByColor</span>
          </Combo>
        </div>
        <div className="flex h-[23px] items-center">
          <div className={`${bar} h-full w-[75px] pl-[6px]`}>
            <Items list={["edit1", "edit2", "edit3"]} />
          </div>
          <div className={`${bar} ml-[2px] h-full w-[624px]`}>
            <Grip />
            <Items list={["dimh", "dima", "dimarc", "dimo", "|", "dimr", "dimj", "dimd", "dimang", "|", "qdim", "base", "cont", "space", "brk", "|", "tol", "center", "insp", "jog", "|", "dedit", "dtedit", "dupd", "|"]} sep="w-[6px]" />
            <Combo className="h-[22px] w-[117px]">
              <span className="ml-[19px]">STANDARD</span>
            </Combo>
            <span className="flex"><Items list={["dstyle"]} /></span>
          </div>
          <div className={`${bar} ml-[2px] h-full w-[472px]`}>
            <Grip />
            <span className="-ml-[2px] flex h-full items-center">
              <Items list={["s1", "s2", "s3", "|", "s4", "s5", "s6", "s7", "s8", "s9", "s10", "s11", "|", "s13", "s14", "s15", "s16", "|", "s17", "s18", "s19", "s20", "s21"]} sep="w-[6px]" />
            </span>
          </div>
        </div>
      </div>

      {/* work area */}
      <div className="flex min-h-0 flex-1">
        <div className="w-[32px] shrink-0 bg-[#39424f] pt-[1px] pr-[5px] pl-[4px]">
          <Column list={LEFT} />
        </div>
        <div className="relative min-w-0 flex-1 bg-[#212830]">
          <Drawing />

          <span className="absolute top-[4px] left-[3px] text-[13px] text-black">[-][俯视][二维线框]</span>

          {/* view cube */}
          <div className="absolute top-[21px] left-[1394px] h-[116px] w-[116px] rounded-full border-[13px] border-[#474c54]" />
          <div className="absolute top-[55px] left-[1427px] flex h-[50px] w-[50px] items-center justify-center bg-[#bcbfc2]">
            <span className="flex h-[32px] w-[32px] items-center justify-center bg-[#a9adb2] font-['Liberation_Serif','Noto_Sans_CJK_SC',serif] text-[30px] leading-none text-[#6c7075]">上</span>
          </div>
          <span className="absolute top-[15px] left-[1442px] text-[19px] leading-[24px] text-[#b0b2b5]">北</span>
          <span className="absolute top-[125px] left-[1442px] text-[19px] leading-[24px] text-[#b0b2b5]">南</span>
          <span className="absolute top-[69px] left-[1388px] text-[19px] leading-[24px] text-[#b0b2b5]">西</span>
          <span className="absolute top-[69px] left-[1498px] text-[19px] leading-[24px] text-[#b0b2b5]">东</span>
          <div className="absolute top-[165px] left-[1424px] flex h-[17px] w-[56px] items-center justify-center gap-[3px] rounded-[4px] bg-[#777c85] text-[10px] tracking-[1px] text-[#a3a7ad]">
            未命名
            <span className="border-x-[4px] border-t-[5px] border-x-transparent border-t-[#a3a7ad]" />
          </div>

          {/* UCS */}
          <svg className="absolute top-[1075px] left-[16px]" width={84} height={82} viewBox="0 0 84 82" fill="none" stroke="#d6d6d6" strokeWidth={1.2}>
            <path d="M11.5 20V66M11.5 71H61" />
            <rect x={7} y={64} width={9} height={10} />
          </svg>
          <span className="absolute top-[1073px] left-[29px] text-[16px] leading-[20px] text-[#d6d6d6]">Y</span>
          <span className="absolute top-[1126px] left-[80px] text-[19px] leading-[20px] text-[#d6d6d6]">X</span>

          {/* command history */}
          <div className="absolute top-[1069px] left-[276px] flex flex-col items-start gap-[4.5px] font-['Liberation_Mono','Noto_Sans_CJK_SC',monospace] text-[17px] leading-[22px] text-[#a6a8aa]">
            <span className="rounded-[2px] bg-[#45494f] px-[2px]">命令: _textedit</span>
            <span className="rounded-[2px] bg-[#45494f] px-[2px]">当前设置: 编辑模式 = Multiple</span>
            <span className="rounded-[2px] bg-[#45494f] px-[2px]">选择注释对象或 [放弃(U)/模式(M)]: *取消*</span>
          </div>

          {/* command line */}
          <div className="absolute bottom-0 left-[215px] flex h-[25px] w-[1101px] items-stretch">
            <div className="flex w-[54px] items-center gap-[6px] bg-[#2a313c] pl-[3px]">
              <span className="h-[20px] w-[5px] border-x border-dotted border-[#b0b4ba]" />
              <X size={12} color="#c9ccd1" strokeWidth={2.5} />
              <Wrench size={15} color="#d9dbdf" fill="#d9dbdf" className="ml-[3px]" />
            </div>
            <div className="flex flex-1 items-center rounded-t-[2px] bg-[#bcbdbf] pl-[4px]">
              <svg width={16} height={14} viewBox="0 0 16 14"><rect x={0.5} y={0.5} width={15} height={13} fill="#dadada" stroke="#4a4a4a" /><path d="M1 3h14" stroke="#4a4a4a" strokeWidth={2} /><path d="M3 6l2 2-2 2M7 10h4" stroke="#222" fill="none" /></svg>
              <span className="ml-[2px] border-x-[3px] border-t-[4px] border-x-transparent border-t-[#555]" />
              <span className="ml-[9px] text-[16px] tracking-[0.5px] text-[#7a7c80] italic">键入命令</span>
              <span className="mr-[6px] ml-auto border-x-[4px] border-b-[4px] border-x-transparent border-b-[#555]" />
            </div>
          </div>
        </div>
        <div className="flex w-[35px] shrink-0 justify-start border-r border-[#0a86d4] bg-[#39424f] pl-[4px]">
          <div className="h-fit"><Column list={RIGHT} /></div>
        </div>
      </div>

      <StatusBar />
      <div className="h-[2px] shrink-0 bg-[#0a86d4]" />

      {/* site watermark, on top of everything */}
      <svg className="pointer-events-none absolute inset-0" width={1600} height={1333}>
        {MARKS.map(([x, y]) => (
          <text key={`${x}-${y}`} transform={`translate(${x} ${y}) rotate(-45)`} fontSize={37} fontFamily={LAT} fill="rgba(170,175,180,0.12)" stroke="rgba(170,175,180,0.14)" strokeWidth={5} strokeLinejoin="round" style={{ paintOrder: "stroke" }}>
            知末网www.znzmo.com
          </text>
        ))}
      </svg>
      <span className="pointer-events-none absolute top-[1193px] left-[1405px] font-['Noto_Sans_CJK_SC',sans-serif] text-[63px] leading-[80px] font-medium text-[#d0d2d4]">知末</span>
      <span className="pointer-events-none absolute top-[1276px] left-[1361px] font-['Roboto','Liberation_Sans',sans-serif] text-[32px] leading-[36px] font-medium text-[#e4e5e6]">ID: 1170542417</span>
    </div>
  );
}
